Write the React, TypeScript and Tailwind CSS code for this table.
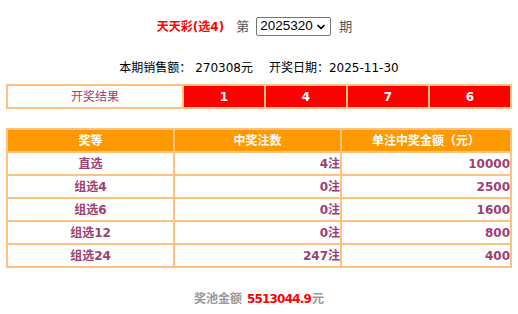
import { ChevronDown } from 'lucide-react';

const prizes = [
  { name: '直选', count: '4注', amount: '10000' },
  { name: '组选4', count: '0注', amount: '2500' },
  { name: '组选6', count: '0注', amount: '1600' },
  { name: '组选12', count: '0注', amount: '800' },
  { name: '组选24', count: '247注', amount: '400' },
];

const balls = ['1', '4', '7', '6'];

export default function App() {
  return (
    <div
      className="w-[518px] h-[314px] bg-white text-[12px] text-black"
      style={{ fontFamily: '"DejaVu Sans", "Noto Sans CJK SC", sans-serif' }}
    >
      <div className="flex h-[52px] items-center justify-center pt-[1px] pr-[9px]">
        <span className="text-[12px] font-bold text-[#ff0000]">天天彩(选4)</span>
        <span className="ml-[12px] text-[13px] text-[#555]">第</span>
        <div
          className="ml-[7px] flex h-[19px] w-[75px] items-center justify-between rounded-[2px] border border-[#767676] pl-[3px] pr-[3px] text-[13.5px]"
          style={{ fontFamily: '"Liberation Sans", sans-serif' }}
        >
          <span>2025320</span>
          <ChevronDown className="h-[12px] w-[12px]" strokeWidth={3.5} />
        </div>
        <span className="ml-[8px] text-[13px] text-[#555]">期</span>
      </div>

      <div className="flex h-[32px] items-center justify-center pb-[1px]">
        <span>本期销售额： 270308元</span>
        <span className="ml-[16px]">开奖日期：2025-11-30</span>
      </div>

      <table className="mx-[6px] w-[506px] border-separate border-spacing-[2px] bg-[#ffc180]">
        <tbody>
          <tr className="h-[21px]">
            <td className="w-[174px] bg-white p-0 text-center text-[#9c3f73]">开奖结果</td>
            {balls.map((b, i) => (
              <td key={i} className="bg-[#ff0000] p-0 text-center font-bold text-white">
                {b}
              </td>
            ))}
          </tr>
        </tbody>
      </table>

      <table className="mx-[6px] mt-[19px] w-[506px] border-separate border-spacing-[2px] bg-[#ffc180]">
        <thead>
          <tr className="h-[21px] bg-[#ff9900] text-white">
            <th className="w-[165px] p-0 text-center font-bold">奖等</th>
            <th className="w-[165px] p-0 text-center font-bold">中奖注数</th>
            <th className="p-0 text-center font-bold">单注中奖金额（元）</th>
          </tr>
        </thead>
        <tbody>
          {prizes.map((p) => (
            <tr key={p.name} className="h-[21px] bg-white font-bold text-[#9c3f73]">
              <td className="p-0 text-center">{p.name}</td>
              <td className="p-0 text-right">{p.count}</td>
              <td className="p-0 text-right">{p.amount}</td>
            </tr>
          ))}
        </tbody>
      </table>

      <div className="mt-[22px] flex justify-center font-bold">
        <span className="text-[#999]">奖池金额</span>
        <span className="ml-[5px] tracking-[-0.8px] text-[#ff0000]">5513044.9</span>
        <span className="ml-[1px] text-[#999]">元</span>
      </div>
    </div>
  );
}
